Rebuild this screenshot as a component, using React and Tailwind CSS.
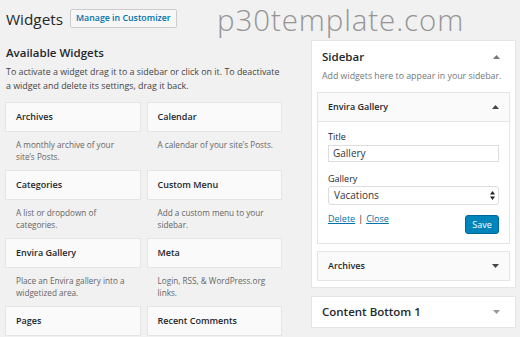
import React from "react";

function Arrow({ up = true, color = "#555" }) {
  return (
    <svg width="7" height="4" viewBox="0 0 7 4" className="shrink-0">
      {up ? (
        <path d="M0 4 L3.5 0 L7 4 Z" fill={color} />
      ) : (
        <path d="M0 0 L3.5 4 L7 0 Z" fill={color} />
      )}
    </svg>
  );
}

function WidgetItem({ title, desc }) {
  return (
    <div className="flex flex-col">
      <div className="h-[30px] bg-[#fafafa] border border-[#e5e5e5] flex items-center pl-[10px] text-[9px] font-semibold text-[#23282d]">
        {title}
      </div>
      <div className="h-[38px] pt-[7px] pl-[11px] pr-[8px] text-[8.2px] leading-[12px] text-[#666]">
        {desc}
      </div>
    </div>
  );
}

export default function App() {
  const widgets = [
    ["Archives", "A monthly archive of your site\u2019s Posts."],
    ["Calendar", "A calendar of your site\u2019s Posts."],
    ["Categories", "A list or dropdown of categories."],
    ["Custom Menu", "Add a custom menu to your sidebar."],
    ["Envira Gallery", "Place an Envira gallery into a widgetized area."],
    ["Meta", "Login, RSS, & WordPress.org links."],
    ["Pages", ""],
    ["Recent Comments", ""],
  ];
  return (
    <div
      className="relative w-[520px] h-[337px] overflow-hidden bg-[#f1f1f1] text-[#23282d]"
      style={{ fontFamily: '"Open Sans", "Noto Sans", sans-serif' }}
    >
      <div className="pointer-events-none absolute left-[217px] top-[2px] text-[29.5px] font-light text-[#959595] leading-[36px] tracking-[0.9px] whitespace-nowrap">
        p30template.com
      </div>

      <div className="flex items-center pl-[6px] pt-[8px] h-[29px]">
        <h1 className="text-[15.3px] leading-[20px] font-normal text-[#23282d]">Widgets</h1>
        <div className="ml-[7px] h-[19px] px-[5px] flex items-center bg-[#f7f7f7] border border-[#cccccc] rounded-[2px] text-[8.8px] font-semibold text-[#0073aa]">
          Manage in Customizer
        </div>
      </div>

      <div className="flex pt-[11px]">
        <div className="w-[277px] ml-[5px] pt-[5px]">
          <h2 className="pl-[1px] text-[11.5px] leading-[16px] font-semibold text-[#23282d]">Available Widgets</h2>
          <p className="pl-[1px] mt-[4px] text-[8.9px] leading-[14px] text-[#444] whitespace-nowrap">
            To activate a widget drag it to a sidebar or click on it. To deactivate
            <br />a widget and delete its settings, drag it back.
          </p>
          <div className="mt-[9px] grid grid-cols-2 gap-x-[6px]">
            {widgets.map(([t, d]) => (
              <WidgetItem key={t} title={t} desc={d} />
            ))}
          </div>
        </div>

        <div className="ml-[29px] w-[205px] flex flex-col gap-[8px]">
          <div className="bg-white border border-[#e5e5e5] pl-[5px] pr-[5px] pb-[6px]">
            <div className="flex items-center justify-between h-[16px] mt-[8px] pl-[5px] pr-[10px]">
              <span className="text-[11.5px] font-semibold text-[#23282d]">Sidebar</span>
              <Arrow up color="#72777c" />
            </div>
            <p className="mt-[5px] pl-[5px] text-[8.8px] leading-[12px] text-[#72777c] whitespace-nowrap">
              Add widgets here to appear in your sidebar.
            </p>
            <div className="mt-[10px] border border-[#e5e5e5] bg-white">
              <div className="h-[29px] bg-[#fafafa] border-b border-[#e5e5e5] flex items-center justify-between pl-[10px] pr-[10px]">
                <span className="text-[9px] font-semibold">Envira Gallery</span>
                <Arrow up color="#444" />
              </div>
              <div className="px-[10px] pt-[9px] pb-[9px]">
                <div className="text-[9px] leading-[12px] text-[#23282d]">Title</div>
                <div className="mt-[2px] h-[17px] border border-[#dddddd] bg-white flex items-center pl-[4px] text-[10px] text-[#32373c]">
                  Gallery
                </div>
                <div className="mt-[11px] text-[9px] leading-[12px] text-[#23282d]">Gallery</div>
                <div className="mt-[1px] h-[19px] border border-[#dddddd] rounded-[3px] bg-white flex items-center justify-between pl-[5px] pr-[3px] text-[10px] text-[#32373c]">
                  <span>Vacations</span>
                  <svg width="5" height="9" viewBox="0 0 5 9">
                    <path d="M0 3.5 L2.5 0 L5 3.5 Z" fill="#222" />
                    <path d="M0 5.5 L2.5 9 L5 5.5 Z" fill="#222" />
                  </svg>
                </div>
                <div className="mt-[10px] flex items-start justify-between">
                  <div className="text-[9px] leading-[12px] text-[#0073aa] -mt-[2px]">
                    <span className="underline">Delete</span>
                    <span className="text-[#23282d] px-[3px]">|</span>
                    <span className="underline">Close</span>
                  </div>
                  <div className="h-[19px] w-[34px] bg-[#0085ba] border border-[#006799] rounded-[3px] flex items-center justify-center text-[9px] text-white">
                    Save
                  </div>
                </div>
              </div>
            </div>
            <div className="mt-[7px] h-[30px] bg-[#fafafa] border border-[#e5e5e5] flex items-center justify-between pl-[10px] pr-[10px]">
              <span className="text-[9px] font-semibold">Archives</span>
              <Arrow up={false} color="#444" />
            </div>
          </div>
          <div className="h-[32px] bg-white border border-[#e5e5e5] flex items-center justify-between pl-[10px] pr-[15px]">
            <span className="text-[11.5px] font-semibold text-[#23282d]">Content Bottom 1</span>
            <Arrow up={false} color="#999" />
          </div>
        </div>
      </div>
    </div>
  );
}
